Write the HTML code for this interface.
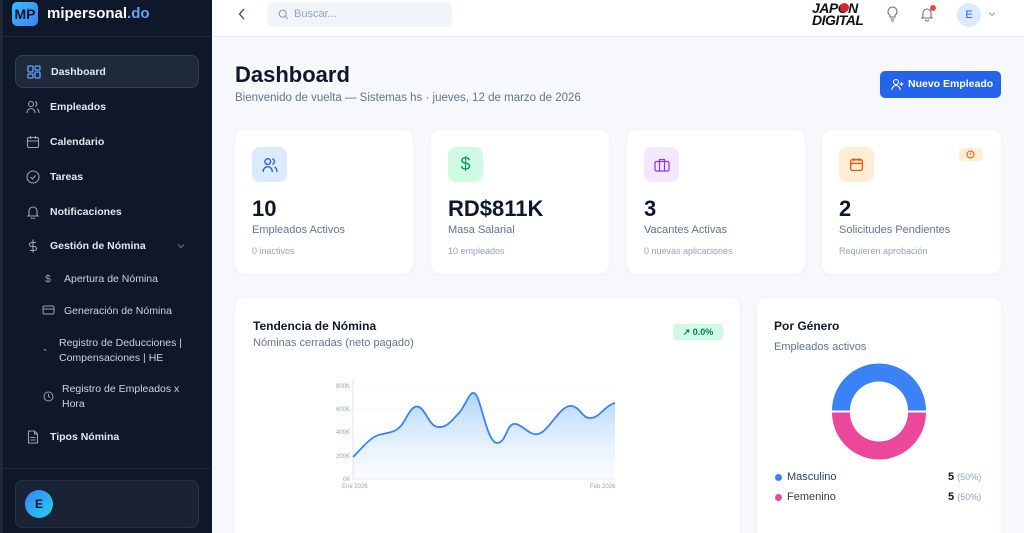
<!DOCTYPE html>
<html><head><meta charset="utf-8"><style>
*{box-sizing:border-box;margin:0;padding:0}
html,body{width:1024px;height:533px;overflow:hidden}
body{font-family:"Liberation Sans",sans-serif;background:#f6f8fb;position:relative}
.sb{position:absolute;left:0;top:0;width:212px;height:533px;background:#0f172a}
.strip{position:absolute;left:0;top:0;width:3px;height:533px;background:#1e293b}
.logo{position:absolute;left:12px;top:2px;width:26px;height:24px;border-radius:5px;background:linear-gradient(135deg,#38bdf8,#3b82f6);color:#0f172a;font-weight:bold;font-size:14px;text-align:center;line-height:24px}
.brand{position:absolute;left:47px;top:5px;color:#fff;font-weight:bold;font-size:15px}
.brand span{color:#60a5fa}
.sep{position:absolute;left:3px;width:209px;height:1px;background:#1e293b}
.nav{position:absolute;left:15px;width:184px;height:33px;color:#e2e8f0;font-size:10.5px;font-weight:bold;display:flex;align-items:center;padding-left:11px}
.nav svg{width:14px;height:14px;margin-right:10px;flex:none}
.nav.act{background:#1e293b;border:1px solid #334155;border-radius:8px}
.sub{position:absolute;color:#cbd5e1;font-size:10.5px;line-height:15px}
.top{position:absolute;left:212px;top:0;right:0;height:37px;background:#fff;border-bottom:1px solid #e8ecf2}
.search{position:absolute;left:267px;top:2px;width:185px;height:25px;background:#f1f5f9;border-radius:7px;color:#94a3b8;font-size:11px;line-height:25px;padding-left:27px}
.card{position:absolute;background:#fff;border-radius:10px;box-shadow:0 1px 4px rgba(15,23,42,.05)}
.ic{position:absolute;left:17px;top:17px;width:35px;height:35px;border-radius:8px;display:flex;align-items:center;justify-content:center}
.big{position:absolute;left:17px;top:66px;font-size:22px;font-weight:bold;color:#0f172a}
.lab{position:absolute;left:17px;top:94px;font-size:11px;color:#64748b}
.sm{position:absolute;left:17px;top:116px;font-size:9px;color:#94a3b8}
</style></head><body>
<div class="sb">
<div class="strip"></div>
<div class="logo">MP</div><div class="brand">mipersonal<span>.do</span></div>
<div class="sep" style="top:36px"></div>
<div class="nav act" style="top:55px"><svg viewBox="0 0 14 14" fill="none" stroke="#60a5fa" stroke-width="1.3"><rect x="1" y="1" width="5" height="6" rx="1"/><rect x="8" y="1" width="5" height="4" rx="1"/><rect x="1" y="9" width="5" height="4" rx="1"/><rect x="8" y="7" width="5" height="6" rx="1"/></svg>Dashboard</div>
<div class="nav" style="top:90px"><svg viewBox="0 0 14 14" fill="none" stroke="#94a3b8" stroke-width="1.1"><circle cx="5" cy="4" r="2.5"/><path d="M1 13c0-3 2-4.5 4-4.5s4 1.5 4 4.5M9 1.6a2.5 2.5 0 010 4.8M11 8.8c1.3.6 2 2 2 4.2"/></svg>Empleados</div>
<div class="nav" style="top:125px"><svg viewBox="0 0 14 14" fill="none" stroke="#94a3b8" stroke-width="1.1"><rect x="1.5" y="2.5" width="11" height="10" rx="1.5"/><path d="M1.5 6h11M4.5 1v3M9.5 1v3"/></svg>Calendario</div>
<div class="nav" style="top:160px"><svg viewBox="0 0 14 14" fill="none" stroke="#94a3b8" stroke-width="1.1"><circle cx="7" cy="7" r="6"/><path d="M4.5 7l2 2 3-3.5"/></svg>Tareas</div>
<div class="nav" style="top:195px"><svg viewBox="0 0 14 14" fill="none" stroke="#94a3b8" stroke-width="1.1"><path d="M3 10V6a4 4 0 018 0v4l1 1H2zM5.5 12.5a1.5 1.5 0 003 0"/></svg>Notificaciones</div>
<div class="nav" style="top:229px"><svg viewBox="0 0 14 14" fill="none" stroke="#94a3b8" stroke-width="1.1"><path d="M7 0.5v13M10 3.5H5.5a2 2 0 000 4h3a2 2 0 010 4H4"/></svg>Gestión de Nómina<svg style="position:absolute;left:162px;width:8px;height:8px;margin:0" viewBox="0 0 8 8" fill="none" stroke="#64748b" stroke-width="1"><path d="M1 2.5l3 3 3-3"/></svg></div>
<div class="sub" style="left:45px;top:272px;color:#94a3b8">$</div><div class="sub" style="left:64px;top:272px">Apertura de Nómina</div>
<svg style="position:absolute;left:42px;top:305px" width="13" height="10" viewBox="0 0 13 10" fill="none" stroke="#94a3b8"><rect x="1" y="1" width="11" height="8" rx="1.5"/><path d="M1 4h11"/></svg><div class="sub" style="left:64px;top:304px">Generación de Nómina</div>
<div class="sub" style="left:43px;top:343px;color:#94a3b8;font-size:7px">⌁</div><div class="sub" style="left:59px;top:336px">Registro de Deducciones |<br>Compensaciones | HE</div>
<svg style="position:absolute;left:43px;top:391px" width="11" height="11" viewBox="0 0 11 11" fill="none" stroke="#94a3b8"><circle cx="5.5" cy="5.5" r="4.5"/><path d="M5.5 3v2.5l1.5 1"/></svg><div class="sub" style="left:62px;top:382px">Registro de Empleados x<br>Hora</div>
<div class="nav" style="top:420px"><svg viewBox="0 0 14 14" fill="none" stroke="#94a3b8" stroke-width="1.1"><path d="M2.5 1h6l3 3v9h-9zM8.5 1v3h3M4.5 7.5h5M4.5 10h5"/></svg>Tipos Nómina</div>
<div class="sep" style="top:468px"></div>
<div style="position:absolute;left:15px;top:480px;width:184px;height:48px;background:#1a2335;border:1px solid #2a3446;border-radius:8px"></div>
<div style="position:absolute;left:25px;top:490px;width:28px;height:28px;border-radius:50%;background:linear-gradient(135deg,#3b82f6,#22d3ee);color:#0f172a;font-size:12px;font-weight:bold;text-align:center;line-height:28px">E</div>
</div>
<div class="top"></div>
<svg style="position:absolute;left:238px;top:8px" width="8" height="12" viewBox="0 0 8 12" fill="none" stroke="#475569" stroke-width="1.4"><path d="M6 1L1.5 6 6 11"/></svg>
<div class="search">Buscar...</div>
<svg style="position:absolute;left:278px;top:9px" width="11" height="11" viewBox="0 0 11 11" fill="none" stroke="#94a3b8" stroke-width="1.2"><circle cx="4.7" cy="4.7" r="3.5"/><path d="M7.3 7.3l2.7 2.7"/></svg>
<div style="position:absolute;left:812px;top:2px;width:58px;font:italic bold 14px/12px 'Liberation Sans',sans-serif;color:#111;letter-spacing:-0.5px">JAPON<br>DIGITAL</div>
<div style="position:absolute;left:840px;top:3px;width:9px;height:9px;border-radius:50%;background:#dc2626"></div>
<svg style="position:absolute;left:886px;top:6px" width="13" height="16" viewBox="0 0 13 16" fill="none" stroke="#64748b" stroke-width="1.1"><path d="M6.5 1a4.5 4.5 0 00-2.5 8.2V11h5V9.2A4.5 4.5 0 006.5 1zM4.5 13h4M5 15h3"/></svg>
<svg style="position:absolute;left:920px;top:6px" width="14" height="16" viewBox="0 0 14 16" fill="none" stroke="#64748b" stroke-width="1.1"><path d="M3 11V7a4 4 0 018 0v4l1 1H2zM5.5 13.5a1.5 1.5 0 003 0"/></svg>
<div style="position:absolute;left:930px;top:5px;width:6px;height:6px;border-radius:50%;background:#ef4444"></div>
<div style="position:absolute;left:957px;top:3px;width:24px;height:24px;border-radius:50%;background:#dbeafe;color:#2563eb;font-size:11px;text-align:center;line-height:24px">E</div>
<svg style="position:absolute;left:988px;top:11px" width="8" height="6" viewBox="0 0 8 6" fill="none" stroke="#94a3b8"><path d="M1 1.5l3 3 3-3"/></svg>

<div style="position:absolute;left:235px;top:62px;font-size:22px;font-weight:bold;color:#0f172a">Dashboard</div>
<div style="position:absolute;left:235px;top:92px;font-size:11.5px;color:#64748b">Bienvenido de vuelta — Sistemas hs · jueves, 12 de marzo de 2026</div>
<div style="position:absolute;left:880px;top:71px;width:121px;height:27px;background:#2563eb;border-radius:5px;color:#fff;font-size:10.5px;font-weight:bold;line-height:27px;padding-left:28px">Nuevo Empleado</div>
<svg style="position:absolute;left:891px;top:78px" width="13" height="13" viewBox="0 0 13 13" fill="none" stroke="#fff" stroke-width="1.1"><circle cx="5" cy="4" r="2.5"/><path d="M1 12c0-3 2-4.5 4-4.5s4 1.5 4 4.5M10.5 4v4M8.5 6h4"/></svg>

<div class="card" style="left:235px;top:130px;width:178px;height:144px"><div class="ic" style="background:#dbeafe"><svg width="16" height="16" viewBox="0 0 14 14" fill="none" stroke="#2563eb" stroke-width="1.2"><circle cx="5" cy="4" r="2.5"/><path d="M1 13c0-3 2-4.5 4-4.5s4 1.5 4 4.5M9 1.6a2.5 2.5 0 010 4.8M11 8.8c1.3.6 2 2 2 4.2"/></svg></div><div class="big">10</div><div class="lab">Empleados Activos</div><div class="sm">0 inactivos</div></div>
<div class="card" style="left:431px;top:130px;width:178px;height:144px"><div class="ic" style="background:#d1fae5;color:#059669;font-size:18px">$</div><div class="big">RD$811K</div><div class="lab">Masa Salarial</div><div class="sm">10 empleados</div></div>
<div class="card" style="left:627px;top:130px;width:178px;height:144px"><div class="ic" style="background:#f3e8ff"><svg width="16" height="14" viewBox="0 0 16 14" fill="none" stroke="#9333ea" stroke-width="1.2"><rect x="1" y="3.5" width="14" height="9.5" rx="1.5"/><path d="M5.5 3.5V1.5h5v2M5.5 3.5v9.5M10.5 3.5v9.5"/></svg></div><div class="big">3</div><div class="lab">Vacantes Activas</div><div class="sm">0 nuevas aplicaciones</div></div>
<div class="card" style="left:822px;top:130px;width:179px;height:144px"><div class="ic" style="background:#ffedd5"><svg width="15" height="15" viewBox="0 0 14 14" fill="none" stroke="#ea580c" stroke-width="1.2"><rect x="1.5" y="2.5" width="11" height="10" rx="1.5"/><path d="M1.5 6h11M4.5 1v3M9.5 1v3"/></svg></div><div style="position:absolute;left:137px;top:18px;width:24px;height:13px;background:#ffedd5;border-radius:4px"><svg style="position:absolute;left:7px;top:2px" width="9" height="9" viewBox="0 0 9 9" fill="none" stroke="#ea580c"><circle cx="4.5" cy="4.5" r="3.5"/><path d="M4.5 2.8v2M4.5 6v.3"/></svg></div><div class="big">2</div><div class="lab">Solicitudes Pendientes</div><div class="sm">Requieren aprobación</div></div>

<div class="card" style="left:235px;top:298px;width:505px;height:245px">
<div style="position:absolute;left:18px;top:21px;font-size:12px;font-weight:bold;color:#0f172a">Tendencia de Nómina</div>
<div style="position:absolute;left:18px;top:39px;font-size:11px;color:#64748b">Nóminas cerradas (neto pagado)</div>
<div style="position:absolute;left:438px;top:26px;width:50px;height:16px;background:#d1fae5;border-radius:4px;color:#047857;font-size:9px;font-weight:bold;line-height:16px;text-align:center">↗ 0.0%</div>
</div>
<svg style="position:absolute;left:320px;top:378px" width="310" height="115" viewBox="320 378 310 115" font-family="Liberation Sans" font-size="6" fill="#94a3b8">
<defs><linearGradient id="g" x1="0" y1="0" x2="0" y2="1"><stop offset="0" stop-color="#93c5fd" stop-opacity=".75"/><stop offset="1" stop-color="#dbeafe" stop-opacity=".15"/></linearGradient></defs>
<g stroke="#e5e7eb" stroke-dasharray="2 2" stroke-width=".6"><path d="M353 386H615M353 409H615M353 432H615M353 456H615"/></g>
<path d="M353 379V479H615" stroke="#d1d5db" stroke-width=".6" fill="none"/>
<text x="336" y="388">800K</text><text x="336" y="411">600K</text><text x="336" y="434">400K</text><text x="336" y="458">200K</text><text x="343" y="481">0K</text>
<text x="342" y="488">Ene 2026</text><text x="590" y="488">Feb 2026</text>
<path d="M353 457C365 445 372 435 383 434C392 432 398 432 405 420C410 410 414 405 419 407C426 410 429 426 438 427C447 428 452 420 459 413C466 405 469 392 474 393C481 395 486 442 497 443C507 443 506 422 516 424C524 426 530 436 538 434C549 432 560 404 572 406C581 408 582 418 590 418C600 418 605 405 615 403V479H353Z" fill="url(#g)"/>
<path d="M353 457C365 445 372 435 383 434C392 432 398 432 405 420C410 410 414 405 419 407C426 410 429 426 438 427C447 428 452 420 459 413C466 405 469 392 474 393C481 395 486 442 497 443C507 443 506 422 516 424C524 426 530 436 538 434C549 432 560 404 572 406C581 408 582 418 590 418C600 418 605 405 615 403" fill="none" stroke="#3b82f6" stroke-width="1.8"/>
</svg>

<div class="card" style="left:757px;top:298px;width:244px;height:245px">
<div style="position:absolute;left:17px;top:21px;font-size:12px;font-weight:bold;color:#0f172a">Por Género</div>
<div style="position:absolute;left:17px;top:43px;font-size:11px;color:#64748b">Empleados activos</div>
<div style="position:absolute;left:18px;top:176px;width:7px;height:7px;border-radius:50%;background:#3b82f6"></div>
<div style="position:absolute;left:30px;top:173px;font-size:11px;color:#334155">Masculino</div>
<div style="position:absolute;left:18px;top:196px;width:7px;height:7px;border-radius:50%;background:#ec4899"></div>
<div style="position:absolute;left:30px;top:193px;font-size:11px;color:#334155">Femenino</div>
<div style="position:absolute;left:191px;top:173px;font-size:11px;color:#0f172a;font-weight:bold">5 <span style="font-weight:normal;font-size:9px;color:#94a3b8">(50%)</span></div>
<div style="position:absolute;left:191px;top:193px;font-size:11px;color:#0f172a;font-weight:bold">5 <span style="font-weight:normal;font-size:9px;color:#94a3b8">(50%)</span></div>
</div>
<svg style="position:absolute;left:830px;top:362px" width="98" height="98" viewBox="0 0 98 98">
<path d="M2 48.5A47 47 0 0196 48.5H78A29 29 0 0020 48.5Z" fill="#3b82f6"/>
<path d="M2 50.5A47 47 0 0096 50.5H78A29 29 0 0120 50.5Z" fill="#ec4899"/>
</svg>
</body></html>
